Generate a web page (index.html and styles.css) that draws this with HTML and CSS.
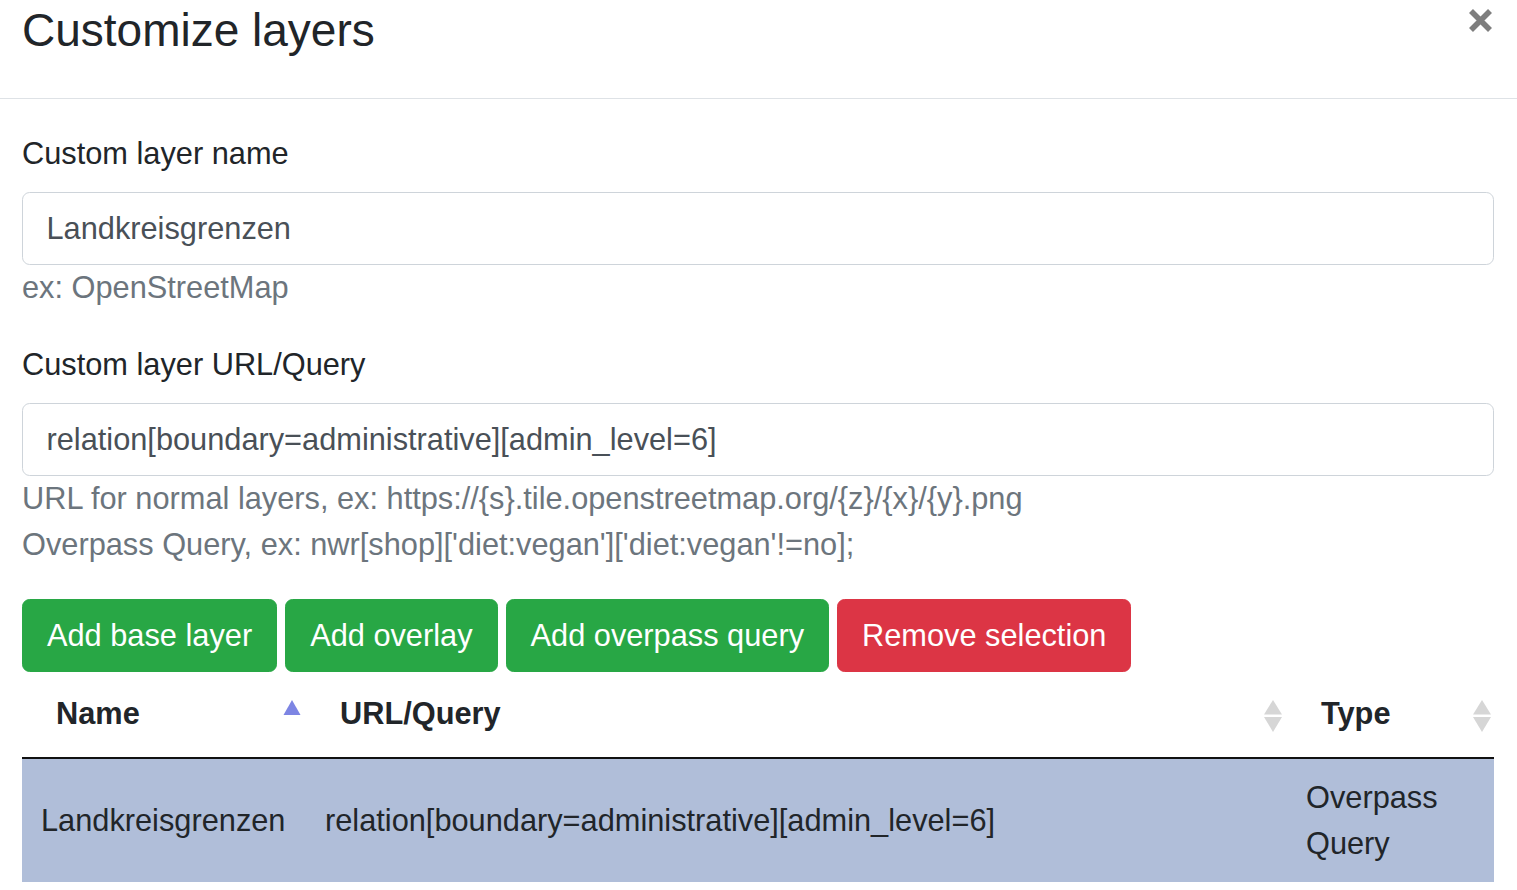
FILE: index.html
```html
<!DOCTYPE html>
<html lang="en">
<head>
<meta charset="utf-8">
<title>Customize layers</title>
<link rel="stylesheet" href="styles.css">
</head>
<body>
<div class="modal">
  <div class="modal-header">
    <h5 class="modal-title">Customize layers</h5>
    <button class="close" type="button" aria-label="Close">
      <svg width="25" height="25" viewBox="0 0 25 25"><path d="M3 3 L22 22 M22 3 L3 22" stroke="#000000" stroke-width="5.6" stroke-linecap="butt" fill="none"/></svg>
    </button>
  </div>
  <div class="modal-body">
    <div class="form-group">
      <label class="label">Custom layer name</label>
      <input class="form-control" type="text" value="Landkreisgrenzen">
      <small class="form-text">ex: OpenStreetMap</small>
    </div>
    <div class="form-group">
      <label class="label">Custom layer URL/Query</label>
      <input class="form-control" type="text" value="relation[boundary=administrative][admin_level=6]">
      <small class="form-text">URL for normal layers, ex: https://{s}.tile.openstreetmap.org/{z}/{x}/{y}.png</small>
      <small class="form-text">Overpass Query, ex: nwr[shop]['diet:vegan']['diet:vegan'!=no];</small>
    </div>
    <div class="btn-row">
      <button class="btn btn-success" type="button">Add base layer</button>
      <button class="btn btn-success" type="button">Add overlay</button>
      <button class="btn btn-success" type="button">Add overpass query</button>
      <button class="btn btn-danger" type="button">Remove selection</button>
    </div>
    <table class="datatable">
      <colgroup>
        <col class="col-name">
        <col class="col-url">
        <col class="col-type">
      </colgroup>
      <thead>
        <tr>
          <th>Name
            <svg class="sort-icon" width="20" height="34" viewBox="0 0 20 34"><path d="M10 0 L18.5 15 L1.5 15 Z" fill="#7d85e3"/></svg>
          </th>
          <th>URL/Query
            <svg class="sort-icon" width="20" height="34" viewBox="0 0 20 34"><path d="M10 0 L19 14.5 L1 14.5 Z" fill="#d6d6d6"/><path d="M1 17 L19 17 L10 32 Z" fill="#d6d6d6"/></svg>
          </th>
          <th>Type
            <svg class="sort-icon sort-icon-last" width="20" height="34" viewBox="0 0 20 34"><path d="M10 0 L19 14.5 L1 14.5 Z" fill="#d6d6d6"/><path d="M1 17 L19 17 L10 32 Z" fill="#d6d6d6"/></svg>
          </th>
        </tr>
      </thead>
      <tbody>
        <tr class="selected">
          <td>Landkreisgrenzen</td>
          <td>relation[boundary=administrative][admin_level=6]</td>
          <td>Overpass Query</td>
        </tr>
      </tbody>
    </table>
  </div>
</div>
</body>
</html>
```
FILE: styles.css
```css
html, body {
  margin: 0;
  padding: 0;
  background: #ffffff;
  overflow: hidden;
}

body {
  font-family: "Liberation Sans", Arial, sans-serif;
  font-size: 30.75px;
  line-height: 1.5;
  color: #212529;
}

.modal {
  width: 1517px;
  height: 890px;
  overflow: hidden;
}

.modal-header {
  display: flex;
  align-items: flex-start;
  padding: 0 24px 33px 22px;
  border-bottom: 1px solid #dee2e6;
}

.modal-title {
  margin: -4px 0 0 0;
  font-size: 46px;
  line-height: 69px;
  font-weight: 400;
  color: #212529;
}

.close {
  display: flex;
  margin: 8px 0 0 auto;
  padding: 0;
  background: none;
  border: 0;
  opacity: 0.5;
  cursor: pointer;
}

.modal-body {
  padding: 32px 23px 0 22px;
}

.form-group {
  margin-bottom: 31px;
}

.label {
  display: block;
  line-height: 46px;
  margin-bottom: 15px;
}

.form-control {
  display: block;
  box-sizing: border-box;
  width: 100%;
  height: 73px;
  margin: 0;
  padding: 11.5px 23.5px;
  font-family: "Liberation Sans", Arial, sans-serif;
  font-size: 30.75px;
  line-height: 46px;
  color: #495057;
  background: #ffffff;
  border: 1px solid #ced4da;
  border-radius: 7.65px;
  outline: none;
}

.form-text {
  display: block;
  font-size: 30.75px;
  line-height: 46px;
  color: #6c757d;
}

.btn-row {
  display: flex;
  gap: 8px;
}

.btn {
  box-sizing: border-box;
  height: 73px;
  margin: 0;
  padding: 0 24px;
  font-family: "Liberation Sans", Arial, sans-serif;
  font-size: 30.75px;
  line-height: 46px;
  color: #ffffff;
  border: 1px solid transparent;
  border-radius: 7.65px;
  cursor: pointer;
}

.btn-success {
  background: #28a745;
  border-color: #28a745;
}

.btn-danger {
  background: #dc3545;
  border-color: #dc3545;
}

.datatable {
  width: 100%;
  table-layout: fixed;
  border-collapse: separate;
  border-spacing: 0;
}

.col-name { width: 284px; }
.col-url { width: 981px; }
.col-type { width: 207px; }

.datatable th {
  position: relative;
  text-align: left;
  font-weight: 700;
  line-height: 46px;
  padding: 19px 34px 20px 34px;
  border-bottom: 2px solid #111111;
  color: #212529;
}

.sort-icon {
  position: absolute;
  right: 4px;
  top: 28px;
}

.sort-icon-last {
  right: 2px;
}

.datatable td {
  padding: 15.5px 19px;
  line-height: 46px;
  vertical-align: middle;
  color: #212529;
}

.datatable tr.selected td {
  background: #b0bed9;
}
```
